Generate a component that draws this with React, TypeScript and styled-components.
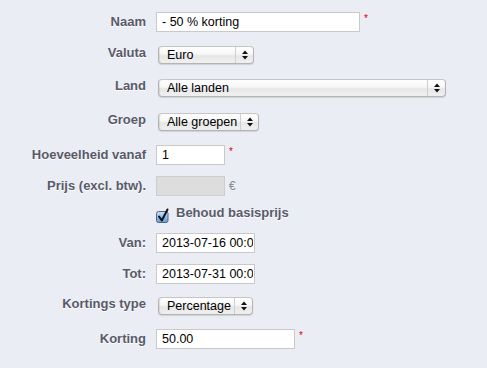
import * as React from "react";
import styled, { createGlobalStyle } from "styled-components";

const GlobalStyle = createGlobalStyle`
  html, body {
    margin: 0;
    padding: 0;
    background: #ebedf4;
    font-family: "Liberation Sans", Arial, sans-serif;
  }
`;

const Form = styled.form`
  display: flex;
  flex-direction: column;
  padding-top: 12px;
  width: 487px;
  height: 368px;
  box-sizing: border-box;
`;

const Row = styled.div<{ $top: number }>`
  display: grid;
  grid-template-columns: 146px 1fr;
  column-gap: 10px;
  align-items: start;
  margin-top: ${(p) => p.$top}px;
`;

const Label = styled.label`
  text-align: right;
  font-size: 13px;
  font-weight: bold;
  line-height: 20px;
  color: #585a69;
  text-shadow: 0 1px 0 #fff;
  white-space: nowrap;
`;

const Field = styled.div`
  display: flex;
  align-items: flex-start;
`;

const TextInput = styled.input<{ $width: number }>`
  box-sizing: border-box;
  width: ${(p) => p.$width}px;
  height: 20px;
  margin: 0;
  padding: 0 1px 0 5px;
  border: 1px solid #c9c9c9;
  background: #fff;
  font-family: "Liberation Sans", Arial, sans-serif;
  font-size: 12.5px;
  color: #000;
  outline: none;

  &:disabled {
    background: #dddddd;
    border-color: #cdcdcd;
  }
`;

const Required = styled.sup`
  color: #e00000;
  font-size: 10px;
  line-height: 10px;
  margin: 2px 0 0 4px;
  vertical-align: top;
`;

const Unit = styled.span`
  color: #8a8a8a;
  font-size: 12px;
  line-height: 20px;
  margin-left: 4px;
`;

const SelectBox = styled.div<{ $width: number }>`
  box-sizing: border-box;
  display: flex;
  width: ${(p) => p.$width}px;
  height: 18px;
  margin: 3px 0 1px 2px;
  border: 1px solid #b4b4b4;
  border-top-color: #c6c6c6;
  border-radius: 4px;
  background: linear-gradient(#ffffff 0%, #f6f6f6 45%, #e6e6e6 55%, #f1f1f1 100%);
  box-shadow: 0 1px 1px rgba(0, 0, 0, 0.12), inset 1px 0 1px rgba(0, 0, 0, 0.1);
  overflow: hidden;
`;

const Select = styled.select`
  flex: 1;
  min-width: 0;
  appearance: none;
  -webkit-appearance: none;
  border: none;
  background: transparent;
  margin: 0;
  padding: 0 0 0 8px;
  height: 16px;
  line-height: 16px;
  font-family: "Liberation Sans", Arial, sans-serif;
  font-size: 12.5px;
  color: #000;
  outline: none;
`;

const Arrows = styled.span`
  display: flex;
  align-items: center;
  justify-content: center;
  width: 17px;
  border-left: 1px solid #cfcfcf;
`;

const CheckField = styled.label`
  display: flex;
  align-items: flex-start;
  gap: 6px;
  font-size: 13px;
  font-weight: bold;
  line-height: 20px;
  color: #585a69;
  text-shadow: 0 1px 0 #fff;
`;

const CheckIcon = styled.svg`
  margin-top: 5px;
  flex: none;
`;

const Spacer = styled.span``;

function SelectArrows(): React.ReactElement {
  return (
    <Arrows>
      <svg width="6" height="10" viewBox="0 0 6 10">
        <path d="M0 4 L3 0.5 L6 4 Z" fill="#111" />
        <path d="M0 6 L3 9.5 L6 6 Z" fill="#111" />
      </svg>
    </Arrows>
  );
}

interface DropdownProps {
  width: number;
  value: string;
}

function Dropdown({ width, value }: DropdownProps): React.ReactElement {
  return (
    <SelectBox $width={width}>
      <Select defaultValue={value}>
        <option>{value}</option>
      </Select>
      <SelectArrows />
    </SelectBox>
  );
}

function Checkbox(): React.ReactElement {
  return (
    <CheckIcon width="14" height="15" viewBox="0 0 14 15">
      <defs>
        <linearGradient id="cb" x1="0" y1="0" x2="0" y2="1">
          <stop offset="0" stopColor="#cfe4fb" />
          <stop offset="0.5" stopColor="#8dbdf0" />
          <stop offset="1" stopColor="#5d9fe6" />
        </linearGradient>
      </defs>
      <rect x="0.5" y="3.5" width="11.5" height="11" rx="2" fill="url(#cb)" stroke="#56657a" />
      <path d="M3 8.5 L5.8 12.5 L11.5 1.5" fill="none" stroke="#111" strokeWidth="2" strokeLinecap="round" strokeLinejoin="round" />
    </CheckIcon>
  );
}

export default function App(): React.ReactElement {
  return (
    <>
      <GlobalStyle />
      <Form onSubmit={(e) => e.preventDefault()}>
        <Row $top={0}>
          <Label>Naam</Label>
          <Field>
            <TextInput $width={204} defaultValue="- 50 % korting" />
            <Required>*</Required>
          </Field>
        </Row>
        <Row $top={11}>
          <Label>Valuta</Label>
          <Field>
            <Dropdown width={96} value="Euro" />
          </Field>
        </Row>
        <Row $top={11}>
          <Label>Land</Label>
          <Field>
            <Dropdown width={288} value="Alle landen" />
          </Field>
        </Row>
        <Row $top={12}>
          <Label>Groep</Label>
          <Field>
            <Dropdown width={101} value="Alle groepen" />
          </Field>
        </Row>
        <Row $top={13}>
          <Label>Hoeveelheid vanaf</Label>
          <Field>
            <TextInput $width={69} defaultValue="1" />
            <Required>*</Required>
          </Field>
        </Row>
        <Row $top={11}>
          <Label>Prijs (excl. btw).</Label>
          <Field>
            <TextInput $width={69} disabled defaultValue="" />
            <Unit>€</Unit>
          </Field>
        </Row>
        <Row $top={7}>
          <Spacer />
          <CheckField>
            <Checkbox />
            Behoud basisprijs
          </CheckField>
        </Row>
        <Row $top={10}>
          <Label>Van:</Label>
          <Field>
            <TextInput $width={99} defaultValue="2013-07-16 00:00:00" />
          </Field>
        </Row>
        <Row $top={11}>
          <Label>Tot:</Label>
          <Field>
            <TextInput $width={99} defaultValue="2013-07-31 00:00:00" />
          </Field>
        </Row>
        <Row $top={10}>
          <Label>Kortings type</Label>
          <Field>
            <Dropdown width={95} value="Percentage" />
          </Field>
        </Row>
        <Row $top={13}>
          <Label>Korting</Label>
          <Field>
            <TextInput $width={139} defaultValue="50.00" />
            <Required>*</Required>
          </Field>
        </Row>
      </Form>
    </>
  );
}
